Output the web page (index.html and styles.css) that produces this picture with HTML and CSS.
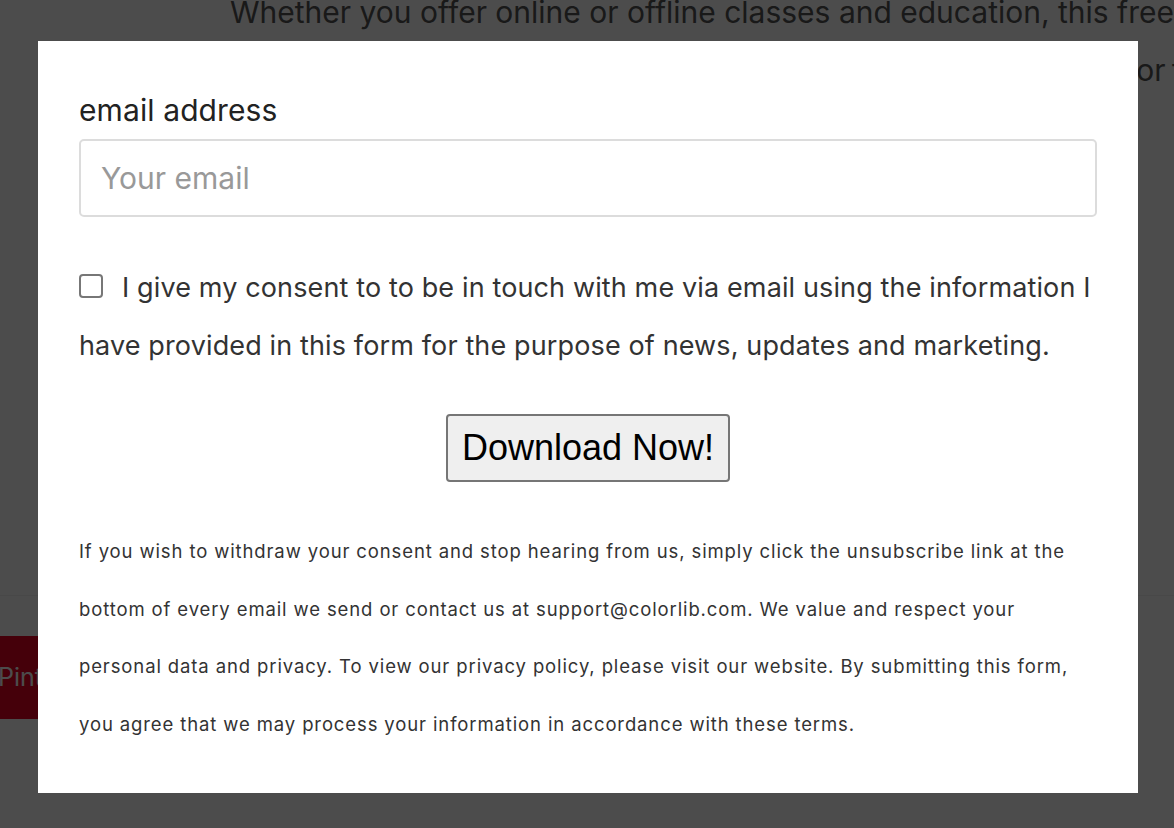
FILE: index.html
```html
<html><head>
<meta charset="UTF-8">
<meta name="viewport" content="width=device-width, initial-scale=1.0">
<title>Free Download - Colorlib</title>
<link rel="stylesheet" href="styles.css">
</head>
<body>
  <main class="page">
    <section class="intro">
      <p class="intro-line">Whether you offer online or offline classes and education, this free template is a great</p>
      <p class="intro-line right">a perfect choice for tutors, coaches and schools looking for the</p>
    </section>
    <section class="share">
      <a class="share-btn" href="#">Pinterest</a>
    </section>
  </main>

  <div class="overlay"></div>

  <div class="modal">
    <form class="signup">
      <label class="field-label" for="email">email address</label>
      <input class="field-input" type="email" id="email" placeholder="Your email">

      <div class="consent">
        <span class="check"></span>I give my consent to to be in touch with me via email using the information I have provided in this form for the purpose of news, updates and marketing.
      </div>

      <div class="actions">
        <button type="button" class="download">Download Now!</button>
      </div>

      <p class="legal">If you wish to withdraw your consent and stop hearing from us, simply click the unsubscribe link at the bottom of every email we send or contact us at support@colorlib.com. We value and respect your personal data and privacy. To view our privacy policy, please visit our website. By submitting this form, you agree that we may process your information in accordance with these terms.</p>
    </form>
  </div>
</body>
</html>
```

FILE: styles.css
```css
html, body {
  margin: 0;
  padding: 0;
  height: 100%;
  overflow: hidden;
}
body {
  font-family: Inter, "Noto Sans", sans-serif;
  background-color: #fff;
  color: #333;
}
.page {
  width: 1300px;
}
.intro {
  padding-left: 230px;
  margin-top: -17px;
  height: 613px;
  box-sizing: border-box;
  border-bottom: 1px solid #f2f2f2;
}
.intro-line {
  margin: 0;
  font-size: 30px;
  line-height: 58px;
  color: #555;
  white-space: nowrap;
}
.intro-line.right {
  text-align: right;
  width: 987px;
  word-spacing: -2px;
}
.share {
  padding-top: 40px;
}
.share-btn {
  display: inline-block;
  margin-left: -26px;
  padding: 0 24px;
  height: 83px;
  line-height: 83px;
  background-color: #e60023;
  color: #fff;
  font-size: 25px;
  text-decoration: none;
}
.overlay {
  position: fixed;
  top: 0;
  left: 0;
  right: 0;
  bottom: 0;
  background-color: rgba(0,0,0,0.7);
}
.modal {
  position: fixed;
  top: 41px;
  left: 38px;
  width: 1100px;
  height: 752px;
  box-sizing: border-box;
  padding: 41px;
  background-color: #fff;
}
.signup {
  display: flex;
  flex-direction: column;
}
.field-label {
  margin: 7px 0 8px;
  font-size: 30px;
  line-height: 42px;
  letter-spacing: 0.1px;
  color: #222;
}
.field-input {
  height: 78px;
  box-sizing: border-box;
  padding: 0 20px;
  border: 2px solid #dcdcdc;
  border-radius: 5px;
  font-family: inherit;
  font-size: 30px;
  color: #333;
  outline: none;
}
.field-input::placeholder {
  color: #999;
}
.consent {
  margin-top: 42px;
  font-size: 27px;
  line-height: 58px;
  letter-spacing: 0.13px;
  color: #333;
}
.check {
  display: inline-block;
  width: 24px;
  height: 24px;
  box-sizing: border-box;
  border: 2px solid #777;
  border-radius: 4px;
  margin-right: 19px;
  vertical-align: -1px;
}
.actions {
  display: flex;
  justify-content: center;
  margin-top: 39px;
}
.download {
  height: 68px;
  padding: 0 14px;
  border: 2px solid #767676;
  border-radius: 4px;
  background-color: #efefef;
  font-family: "Liberation Sans", Arial, sans-serif;
  font-size: 36px;
  color: #000;
}
.legal {
  margin: 41px 0 0;
  font-size: 18.5px;
  line-height: 57.7px;
  letter-spacing: 0.88px;
  color: #333;
}
```
